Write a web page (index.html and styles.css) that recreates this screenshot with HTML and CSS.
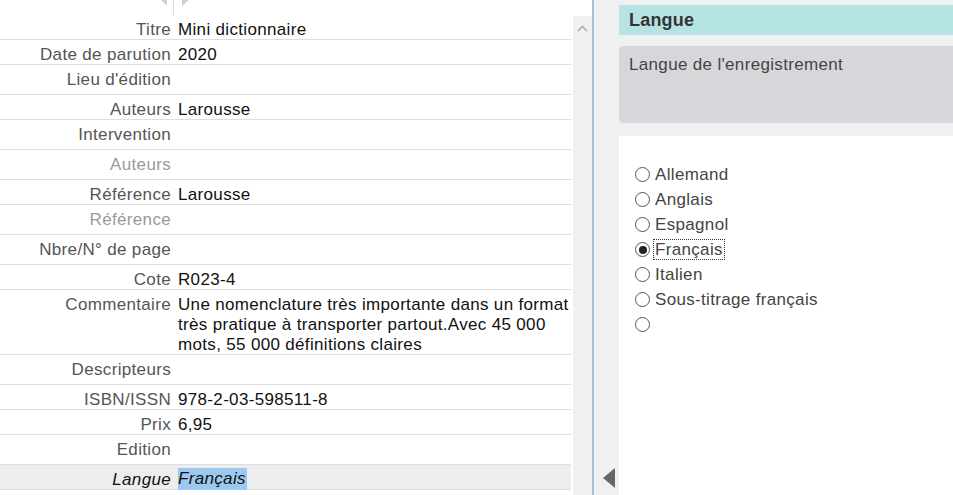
FILE: index.html
```html
<!DOCTYPE html>
<html lang="fr">
<head>
<meta charset="utf-8">
<title>Notice</title>
<link rel="stylesheet" href="styles.css">
</head>
<body>
<div class="left">
  <div class="table-area">
    <div class="topbar">
      <svg width="40" height="15" viewBox="0 0 40 15">
        <polygon points="5,-1 12,-8 12,6" fill="#cfcfcf"/>
        <line x1="18.5" y1="0" x2="18.5" y2="15" stroke="#dcdcdc" stroke-width="1"/>
        <polygon points="35,-1 27,-8 27,6" fill="#cfcfcf"/>
      </svg>
    </div>
    <div class="row"><div class="lbl">Titre</div><div class="val">Mini dictionnaire</div></div>
    <div class="row"><div class="lbl">Date de parution</div><div class="val">2020</div></div>
    <div class="row empty"><div class="lbl">Lieu d'édition</div><div class="val"></div></div>
    <div class="row"><div class="lbl">Auteurs</div><div class="val">Larousse</div></div>
    <div class="row empty"><div class="lbl">Intervention</div><div class="val"></div></div>
    <div class="row empty"><div class="lbl light">Auteurs</div><div class="val"></div></div>
    <div class="row"><div class="lbl">Référence</div><div class="val">Larousse</div></div>
    <div class="row empty"><div class="lbl light">Référence</div><div class="val"></div></div>
    <div class="row empty"><div class="lbl">Nbre/N° de page</div><div class="val"></div></div>
    <div class="row"><div class="lbl">Cote</div><div class="val">R023-4</div></div>
    <div class="row"><div class="lbl">Commentaire</div><div class="val">Une nomenclature très importante dans un format très pratique à transporter partout.Avec 45 000 mots, 55 000 définitions claires</div></div>
    <div class="row empty"><div class="lbl">Descripteurs</div><div class="val"></div></div>
    <div class="row"><div class="lbl">ISBN/ISSN</div><div class="val">978-2-03-598511-8</div></div>
    <div class="row"><div class="lbl">Prix</div><div class="val">6,95</div></div>
    <div class="row empty"><div class="lbl">Edition</div><div class="val"></div></div>
    <div class="row current"><div class="lbl">Langue</div><div class="val"><span class="sel">Français</span></div></div>
  </div>
  <div class="scrollbar">
    <svg class="chev" width="19" height="12" viewBox="0 0 19 12">
      <polyline points="5,9 9.5,4.5 14,9" fill="none" stroke="#b0b0b0" stroke-width="1.6"/>
    </svg>
  </div>
</div>
<div class="divider"></div>
<div class="right">
  <div class="strip">
    <svg width="24" height="22" viewBox="0 0 24 22">
      <polygon points="8,11 20,1 20,21" fill="#666"/>
    </svg>
  </div>
  <div class="content">
    <div class="header">Langue</div>
    <div class="desc">Langue de l'enregistrement</div>
    <div class="choices">
      <div class="opt"><span class="radio"></span><span class="txt">Allemand</span></div>
      <div class="opt"><span class="radio"></span><span class="txt">Anglais</span></div>
      <div class="opt"><span class="radio"></span><span class="txt">Espagnol</span></div>
      <div class="opt"><span class="radio checked"></span><span class="txt focus">Français</span></div>
      <div class="opt"><span class="radio"></span><span class="txt">Italien</span></div>
      <div class="opt"><span class="radio"></span><span class="txt">Sous-titrage français</span></div>
      <div class="opt"><span class="radio"></span><span class="txt"></span></div>
    </div>
  </div>
</div>
</body>
</html>
```
FILE: styles.css
```css
html, body {
  margin: 0;
  padding: 0;
}
body {
  width: 953px;
  height: 495px;
  overflow: hidden;
  display: flex;
  font-family: "Liberation Sans", Arial, sans-serif;
  font-size: 17px;
  letter-spacing: 0.33px;
  background: #fff;
}
.left {
  width: 592px;
  display: flex;
  flex-shrink: 0;
}
.table-area {
  width: 572px;
  flex-shrink: 0;
}
.topbar {
  height: 15px;
  padding-left: 155px;
  overflow: hidden;
}
.topbar svg {
  display: block;
}
.row {
  display: grid;
  grid-template-columns: 171px 1fr;
  column-gap: 7px;
  padding-top: 4px;
  border-bottom: 1px solid #dedede;
  line-height: 20px;
  width: 571px;
}
.row.empty .val {
  min-height: 25px;
}
.lbl {
  text-align: right;
  color: #555;
  position: relative;
  top: 1px;
}
.lbl.light {
  color: #9a9a9a;
}
.val {
  color: #111;
  position: relative;
  top: 1px;
}
.row.current {
  background: #ededed;
}
.row.current .lbl,
.row.current .val {
  font-style: italic;
  color: #111;
}
.sel {
  display: inline-block;
  background: #9cc9ef;
  padding-right: 1px;
  line-height: 22px;
  margin-top: -2px;
  vertical-align: top;
}
.scrollbar {
  width: 19px;
  margin-top: 16px;
  margin-left: 1px;
  background: #f0f0f0;
}
.chev {
  display: block;
  margin-top: 6px;
}
.divider {
  width: 3px;
  flex-shrink: 0;
  background: #f0f0f0;
  border-left: 2px solid #a9bedc;
  box-sizing: border-box;
}
.right {
  flex: 1;
  display: flex;
  background: #f0f0f0;
}
.strip {
  width: 24px;
  flex-shrink: 0;
  display: flex;
  align-items: flex-end;
  padding-bottom: 6px;
  box-sizing: border-box;
}
.strip svg {
  display: block;
}
.content {
  flex: 1;
  padding-top: 5px;
  display: flex;
  flex-direction: column;
}
.header {
  height: 30px;
  background: #b6e4e4;
  padding-left: 10px;
  font-weight: bold;
  font-size: 18px;
  letter-spacing: 0.2px;
  line-height: 30px;
  color: #333;
}
.desc {
  margin-top: 11px;
  height: 77px;
  box-sizing: border-box;
  background: #d7d7db;
  border-radius: 4px 0 0 4px;
  padding: 9px 10px 8px;
  line-height: 20px;
  color: #444;
}
.choices {
  margin-top: 13px;
  flex: 1;
  background: #fff;
  padding-top: 26px;
}
.opt {
  height: 25px;
  display: flex;
  align-items: center;
  padding-left: 16px;
  color: #444;
}
.radio {
  width: 13px;
  height: 13px;
  border: 1.5px solid #555;
  border-radius: 50%;
  background: #fff;
  flex-shrink: 0;
  position: relative;
  box-sizing: content-box;
}
.radio.checked::after {
  content: "";
  position: absolute;
  left: 2.5px;
  top: 2.5px;
  width: 8px;
  height: 8px;
  border-radius: 50%;
  background: #222;
}
.txt {
  margin-left: 4px;
  line-height: 19px;
  padding: 0 1px;
}
.txt.focus {
  outline: 1px dotted #333;
  outline-offset: 0;
}
```
